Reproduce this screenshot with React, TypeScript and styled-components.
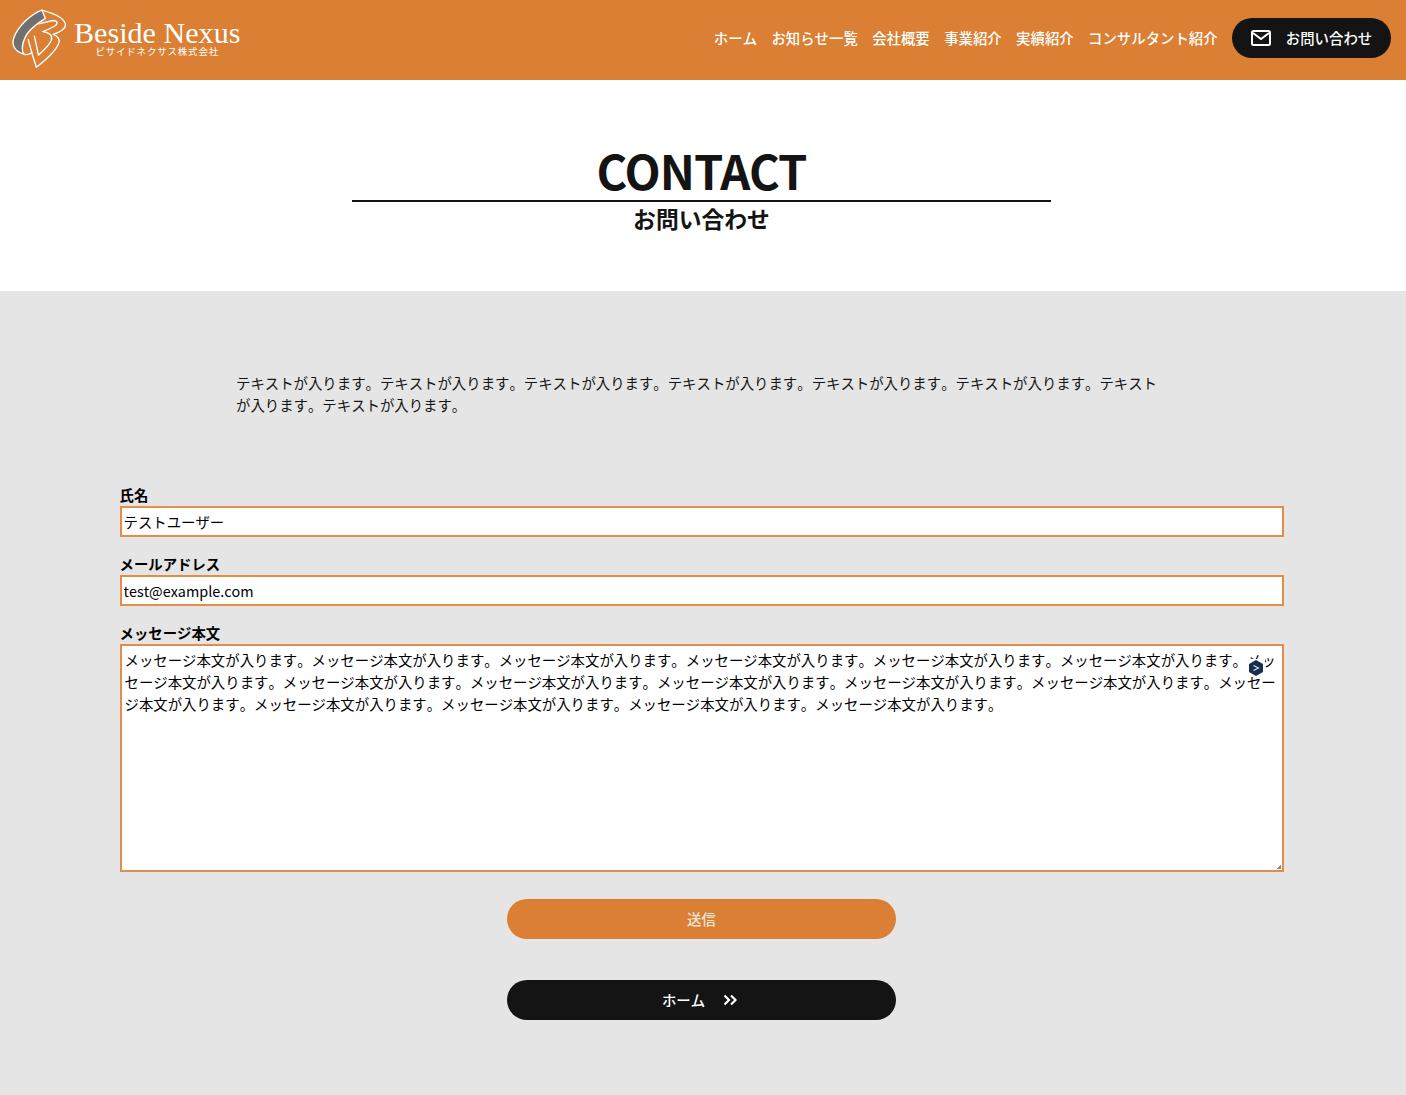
import { ReactNode } from "react"
import styled, { createGlobalStyle } from "styled-components"

const GlobalStyle = createGlobalStyle`
    html, body {
        margin: 0;
        padding: 0;
        background: #e5e5e5;
    }
    body {
        font-family: "Noto Sans CJK JP", "Noto Sans", sans-serif;
        font-kerning: none;
        color: #141414;
    }
    * {
        box-sizing: border-box;
    }
`;

const StyledHeader = styled.header`
    height: 80px;
    background-color: #da7f33;
    display: flex;
    align-items: center;
    justify-content: space-between;
    padding: 0 15px 4px 12px;
`;

const StyledBrand = styled.a`
    display: flex;
    align-items: center;
    gap: 7px;
    color: #fff;
    text-decoration: none;
`;

const StyledBrandText = styled.div`
    display: flex;
    flex-direction: column;
    align-items: center;
`;

const StyledBrandName = styled.span`
    font-family: "Liberation Serif", serif;
    font-size: 30px;
    font-kerning: normal;
    line-height: 26px;
    letter-spacing: 0.05px;
`;

const StyledBrandSub = styled.span`
    font-size: 9.5px;
    line-height: 10px;
    letter-spacing: 0.8px;
`;

const StyledNav = styled.nav`
    display: flex;
    align-items: center;
    gap: 14.4px;
`;

const StyledNavLink = styled.a`
    color: #fff;
    font-size: 14.4px;
    font-weight: 500;
    line-height: 22px;
    text-decoration: none;
    white-space: nowrap;
`;

const StyledContactLink = styled.a`
    display: flex;
    align-items: center;
    justify-content: center;
    gap: 15px;
    width: 159px;
    height: 40px;
    padding-bottom: 1px;
    border-radius: 20px;
    background-color: #141414;
    color: #fff;
    font-size: 14.4px;
    font-weight: 500;
    text-decoration: none;
`;

const StyledHero = styled.section`
    height: 211px;
    padding: 59px 3px 0 0;
    background-color: #fff;
    display: flex;
    flex-direction: column;
    align-items: center;
`;

const StyledTitle = styled.h1`
    width: 699px;
    margin: 0;
    border-bottom: 2px solid #141414;
    font-size: 47px;
    font-weight: 700;
    font-kerning: normal;
    letter-spacing: -0.95px;
    line-height: 61px;
    text-align: center;
`;

const StyledSubtitle = styled.h2`
    margin: 0;
    font-size: 22.8px;
    font-weight: 700;
    line-height: 34px;
`;

const StyledMain = styled.main`
    min-height: 804px;
    padding: 81px 3px 75px 0;
    background-color: #e5e5e5;
    display: flex;
    flex-direction: column;
    align-items: center;
`;

const StyledIntro = styled.p`
    width: 931px;
    margin: 0 0 68px;
    color: #141414;
    font-size: 14.4px;
    line-height: 22px;
`;

const StyledForm = styled.form`
    width: 1164px;
    display: flex;
    flex-direction: column;
`;

const StyledField = styled.div`
    display: flex;
    flex-direction: column;
    margin-bottom: 16px;
`;

const StyledLabel = styled.label`
    color: #000;
    font-size: 14.4px;
    font-weight: 700;
    line-height: 22px;
`;

const StyledInput = styled.input`
    width: 100%;
    height: 31px;
    padding: 0 2px 1px;
    border: 2px solid #e58c46;
    background: #fff;
    color: #000;
    font-family: inherit;
    font-size: 14.4px;
    font-kerning: none;
    outline: none;
`;

const StyledTextareaWrap = styled.div`
    position: relative;
    display: flex;
`;

const StyledTextarea = styled.textarea`
    width: 100%;
    height: 228px;
    padding: 3px;
    border: 2px solid #e58c46;
    background: #fff;
    color: #000;
    font-family: inherit;
    font-size: 14.4px;
    font-kerning: none;
    line-height: 22px;
    outline: none;
    resize: none;
`;

const StyledFloatBadge = styled.span`
    position: absolute;
    top: 15px;
    right: 19px;
    width: 18px;
    height: 18px;
    display: flex;
    justify-content: center;
    background: #fff;
`;

const StyledGrip = styled.span`
    position: absolute;
    right: 3px;
    bottom: 3px;
    width: 4px;
    height: 4px;
    background: linear-gradient(135deg, transparent 50%, #8a8a8a 50%);
`;

const StyledButton = styled.button<{ $dark?: boolean }>`
    display: flex;
    align-items: center;
    justify-content: center;
    gap: 18px;
    width: 389px;
    height: 40px;
    margin: 0 auto;
    padding: 0 0 2px;
    border: none;
    border-radius: 20px;
    background-color: ${(p) => (p.$dark ? "#141414" : "#da7f33")};
    color: ${(p) => (p.$dark ? "#fff" : "#f0e6dc")};
    font-family: inherit;
    font-size: 14.4px;
    font-kerning: none;
    font-weight: 500;
`;

const StyledChevrons = styled.svg`
    margin-top: 2px;
`;

const StyledSubmitRow = styled.div`
    margin-top: 11px;
    margin-bottom: 41px;
`;

const navItems = ["ホーム", "お知らせ一覧", "会社概要", "事業紹介", "実績紹介", "コンサルタント紹介"]

const message = "メッセージ本文が入ります。".repeat(17)
const intro = "テキストが入ります。".repeat(8)

function Logo() {
    return (
        <svg width="55" height="61" viewBox="42 32 158 176" fill="none" stroke="#fff" strokeWidth="4" strokeLinejoin="round">
            <path
                d="M128 38 C95 50 60 85 48 115 C40 135 45 155 75 165 C68 150 72 130 84 108 C96 92 112 78 138 62 Z"
                fill="#707070"
            />
            <path d="M128 38 C150 44 194 58 196 80 C196 92 178 102 160 108 C172 112 182 122 176 135 C168 155 135 185 112 203 L100 165 L88 122" />
            <path d="M118 78 L160 68 C172 68 176 76 165 84 C155 90 145 95 130 100 C150 102 160 112 155 125 C148 142 132 155 118 168 L106 112" />
            <path d="M75 165 C85 168 95 165 100 160" />
        </svg>
    )
}

function MailIcon() {
    return (
        <svg width="20" height="16" viewBox="0 0 20 16" fill="none">
            <rect x="1" y="1" width="18" height="14" rx="1.5" stroke="#fff" strokeWidth="2" />
            <path d="M2 3 L10 9 L18 3" stroke="#fff" strokeWidth="2" />
        </svg>
    )
}

function Chevrons() {
    return (
        <StyledChevrons width="18" height="12" viewBox="0 0 18 12" fill="none">
            <path d="M1.5 1.5 L6 6 L1.5 10.5 M8 1.5 L12.5 6 L8 10.5" stroke="#fff" strokeWidth="2.2" />
        </StyledChevrons>
    )
}

function HexBadge() {
    return (
        <svg width="16" height="18" viewBox="0 0 16 18">
            <path d="M8 1 L15 5 V13 L8 17 L1 13 V5 Z" fill="#14304d" />
            <path d="M5.5 6.5 L10.5 9 L5.5 11.5" fill="none" stroke="#dfe6ee" strokeWidth="1.2" />
        </svg>
    )
}

function Field({ label, children }: { label: string; children: ReactNode }) {
    return (
        <StyledField>
            <StyledLabel>{label}</StyledLabel>
            {children}
        </StyledField>
    )
}

export default function App() {
    return (
        <>
            <GlobalStyle />
            <StyledHeader>
                <StyledBrand href="#">
                    <Logo />
                    <StyledBrandText>
                        <StyledBrandName>Beside Nexus</StyledBrandName>
                        <StyledBrandSub>ビサイドネクサス株式会社</StyledBrandSub>
                    </StyledBrandText>
                </StyledBrand>
                <StyledNav>
                    {navItems.map((item) => (
                        <StyledNavLink href="#" key={item}>{item}</StyledNavLink>
                    ))}
                    <StyledContactLink href="#">
                        <MailIcon />
                        お問い合わせ
                    </StyledContactLink>
                </StyledNav>
            </StyledHeader>

            <StyledHero>
                <StyledTitle>CONTACT</StyledTitle>
                <StyledSubtitle>お問い合わせ</StyledSubtitle>
            </StyledHero>

            <StyledMain>
                <StyledIntro>{intro}</StyledIntro>
                <StyledForm onSubmit={(e) => e.preventDefault()}>
                    <Field label="氏名">
                        <StyledInput defaultValue="テストユーザー" />
                    </Field>
                    <Field label="メールアドレス">
                        <StyledInput defaultValue="test@example.com" />
                    </Field>
                    <Field label="メッセージ本文">
                        <StyledTextareaWrap>
                            <StyledTextarea defaultValue={message} />
                            <StyledFloatBadge>
                                <HexBadge />
                            </StyledFloatBadge>
                            <StyledGrip />
                        </StyledTextareaWrap>
                    </Field>
                    <StyledSubmitRow>
                        <StyledButton type="submit">送信</StyledButton>
                    </StyledSubmitRow>
                    <StyledButton type="button" $dark>
                        ホーム
                        <Chevrons />
                    </StyledButton>
                </StyledForm>
            </StyledMain>
        </>
    )
}
